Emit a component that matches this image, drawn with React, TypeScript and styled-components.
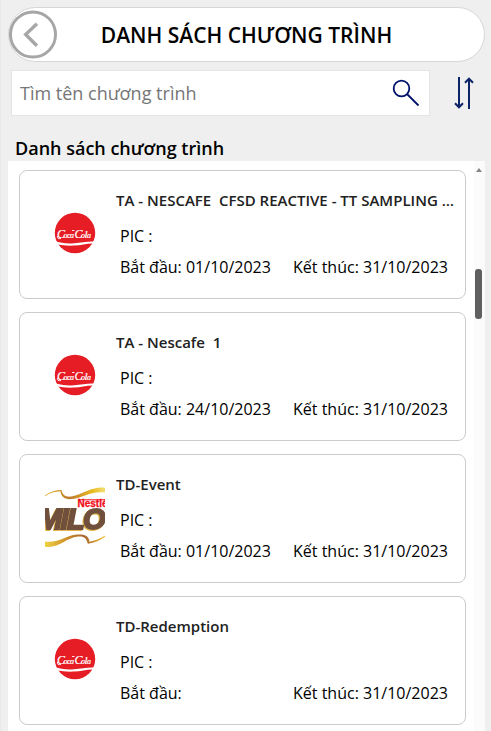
import React from 'react';
import styled, { createGlobalStyle } from 'styled-components';

const GlobalStyle = createGlobalStyle`
  * { box-sizing: border-box; }
  body {
    margin: 0;
    background: #efefef;
    color: #000;
    font-family: "Open Sans", "Noto Sans", sans-serif;
  }
  button { padding: 0; border: 0; background: none; cursor: pointer; }
`;

const Page = styled.div`
  display: flex;
  flex-direction: column;
  height: 100vh;
  overflow: hidden;
  padding: 7px 6px 0 7px;
  border-left: 1px solid #e8e8e8;
`;

const Header = styled.header`
  display: grid;
  grid-template-columns: 48px 1fr 48px;
  align-items: center;
  flex: none;
  height: 55px;
  border: 1px solid #d6d6d6;
  border-radius: 28px;
  background: #fff;
`;

const BackButton = styled.button`
  display: flex;
  align-items: center;
  justify-content: center;
  width: 48px;
  height: 49px;
`;

const Title = styled.h1`
  margin: 0;
  text-align: center;
  font-size: 21px;
  font-weight: 600;
  line-height: 28px;
  white-space: nowrap;
`;

const Tools = styled.div`
  display: flex;
  align-items: center;
  flex: none;
  margin: 8px 11px 0 3px;
  gap: 24px;
`;

const SearchBox = styled.form`
  display: flex;
  flex: 1;
  min-width: 0;
  height: 46px;
  padding: 0 9px 0 8px;
  border: 1px solid #e4e4e4;
  background: #fff;
`;

const SearchInput = styled.input`
  flex: 1;
  min-width: 0;
  padding: 0;
  border: 0;
  outline: 0;
  background: none;
  font: 400 18px/24px "Open Sans", "Noto Sans", sans-serif;
  &::placeholder { color: #767676; opacity: 1; }
`;

const IconButton = styled.button`
  display: flex;
  align-items: center;
  justify-content: center;
  flex: none;
  height: 44px;
`;

const Heading = styled.h2`
  flex: none;
  margin: 20px 0 0 7px;
  font-size: 18px;
  font-weight: 600;
  line-height: 25px;
`;

const ListPanel = styled.section`
  display: flex;
  flex: 1;
  min-height: 0;
  background: #fff;
`;

const List = styled.ul`
  display: flex;
  flex: 1;
  flex-direction: column;
  gap: 13px;
  min-width: 0;
  margin: 0;
  padding: 9px 8px 0 11px;
  overflow: hidden;
  list-style: none;
`;

const Card = styled.li`
  display: grid;
  grid-template-columns: 60px 1fr;
  align-items: start;
  flex: none;
  height: 129px;
  padding: 19px 6px 0 25px;
  column-gap: 11px;
  border: 1px solid #cbcbcb;
  border-radius: 8px;
`;

const LogoCell = styled.div`
  display: flex;
  align-items: center;
  justify-content: center;
  height: 86px;
`;

const Info = styled.div`
  min-width: 0;
`;

const ProgramName = styled.h3`
  margin: 0;
  overflow: hidden;
  color: #212121;
  font-size: 15px;
  font-weight: 600;
  line-height: 20px;
  text-overflow: ellipsis;
  white-space: pre;
`;

const Detail = styled.p`
  margin: 15px 0 0;
  padding-left: 4px;
  font-size: 16px;
  line-height: 22px;
`;

const Dates = styled.div`
  display: grid;
  grid-template-columns: 1fr 166px;
  margin-top: 9px;
  padding-left: 4px;
  font-size: 16px;
  line-height: 22px;
  white-space: nowrap;
`;

const ScrollTrack = styled.div`
  display: flex;
  flex-direction: column;
  align-items: center;
  flex: none;
  width: 11px;
  padding: 7px 2px 0 0;
  gap: 97px;
  background: #fbfbfb;
`;

const ScrollThumb = styled.div`
  width: 7px;
  height: 50px;
  border-radius: 3px;
  background: #606060;
`;

const BackIcon = () => (
  <svg width="49" height="49" viewBox="0 0 49 49" fill="none" stroke="#a6a6a6" strokeWidth="3" aria-hidden="true">
    <circle cx="24.5" cy="24.5" r="23" />
    <path d="M28.5 13.5 17 24.5l11.5 11.5" strokeWidth="3.4" />
  </svg>
);

const SearchIcon = () => (
  <svg width="28" height="28" viewBox="0 0 28 28" fill="none" stroke="#00126b" strokeWidth="1.8" aria-hidden="true">
    <circle cx="9.5" cy="9.5" r="7.8" />
    <path d="m15 15 11.5 11.5" />
  </svg>
);

const SortIcon = () => (
  <svg width="20" height="34" viewBox="0 0 20 34" fill="none" stroke="#0c2467" strokeWidth="2" aria-hidden="true">
    <path d="M5 1v30M1 27.3l4 4 4-4M15 33V3M11 6.7l4-4 4 4" />
  </svg>
);

const ColaLogo = () => (
  <svg width="42" height="42" viewBox="0 0 42 42" role="img" aria-label="Coca-Cola">
    <circle cx="21" cy="21" r="20.2" fill="#e61d25" />
    <text x="3 9.5 13 16 20.5 27 30.5 33" y="25.5" fill="#fff" stroke="#fff" strokeWidth=".2" fontFamily="Liberation Serif, serif" fontStyle="italic" fontSize="12">
      C<tspan fontSize="8">oca</tspan>C<tspan fontSize="8">o</tspan><tspan fontSize="11">l</tspan><tspan fontSize="8">a</tspan>
    </text>
    <path d="M3.5 24q-.8 3.500 3.500 2.500M18 18.500h2.500" fill="none" stroke="#fff" strokeWidth=".9" />
    <path d="M0 29c7 1.500 12 3 20 2.200 8-.7 14-2.200 22-1.600v2c-8-.9-14 1.500-22 2-8 .5-12-1-18-1.200z" fill="#fff" />
  </svg>
);

const MiloLogo = () => (
  <svg width="60" height="60" viewBox="0 0 60 60" role="img" aria-label="Nestlé Milo">
    <defs>
      <linearGradient id="goldTop">
        <stop offset="0" stopColor="#e5b51f" />
        <stop offset=".4" stopColor="#bd782b" />
        <stop offset=".8" stopColor="#e9bd24" />
        <stop offset="1" stopColor="#f5df73" />
      </linearGradient>
      <linearGradient id="goldBottom">
        <stop offset="0" stopColor="#efd242" />
        <stop offset=".35" stopColor="#cf912b" />
        <stop offset=".65" stopColor="#a8622d" />
        <stop offset="1" stopColor="#edc32c" />
      </linearGradient>
      <filter id="goldEdge" x="-10%" y="-20%" width="120%" height="140%">
        <feDropShadow dx="-1" dy="1" stdDeviation=".5" floodColor="#e3b448" />
      </filter>
    </defs>
    <path d="M0 8.200C6 4.500 11 3 16.500 3c1 5 4 7.200 10 6.500C38 7.500 46-.5 60 .7v4.800C46 3.500 39 10.500 27 12c-7 .8-11-2-11.500-7.700C10 4.500 5 6 0 9.200z" fill="url(#goldTop)" />
    <path d="M0 54.500c14 2 20-6 32-7 8-.6 12 1.500 12.500 7.300C50 53.500 55 52 60 48.500v1.300c-5 3.600-10 6-17.200 7-1-5.500-4-8-10-7.200C21 51 14 61.500 0 59.700z" fill="url(#goldBottom)" />
    <text x="32.5" y="20" fill="#f20c19" stroke="#f20c19" strokeWidth=".3" fontFamily="Liberation Sans, sans-serif" fontSize="10" fontWeight="700">Nestlé</text>
    <path d="M33 12.800h27" stroke="#f20c19" strokeWidth="1" />
    <text x="-7 15.5 22 38" y="42" fill="#70503d" stroke="#70503d" strokeWidth="2" filter="url(#goldEdge)" fontFamily="Liberation Sans, sans-serif" fontSize="29" fontStyle="italic" fontWeight="700">MILO</text>
  </svg>
);

interface Program {
  name: string;
  start: string;
  end: string;
  brand: 'cola' | 'milo';
}

const programs: Program[] = [
  { name: 'TA - NESCAFE  CFSD REACTIVE - TT SAMPLING 2023', start: '01/10/2023', end: '31/10/2023', brand: 'cola' },
  { name: 'TA - Nescafe  1', start: '24/10/2023', end: '31/10/2023', brand: 'cola' },
  { name: 'TD-Event', start: '01/10/2023', end: '31/10/2023', brand: 'milo' },
  { name: 'TD-Redemption', start: '', end: '31/10/2023', brand: 'cola' },
];

export default function App() {
  return (
    <>
      <GlobalStyle />
      <Page>
        <Header>
          <BackButton type="button" aria-label="Quay lại"><BackIcon /></BackButton>
          <Title>DANH SÁCH CHƯƠNG TRÌNH</Title>
        </Header>
        <Tools>
          <SearchBox role="search" onSubmit={(event) => event.preventDefault()}>
            <SearchInput type="text" aria-label="Tìm tên chương trình" placeholder="Tìm tên chương trình" />
            <IconButton type="submit" aria-label="Tìm kiếm"><SearchIcon /></IconButton>
          </SearchBox>
          <IconButton type="button" aria-label="Sắp xếp"><SortIcon /></IconButton>
        </Tools>
        <Heading>Danh sách chương trình</Heading>
        <ListPanel>
          <List>
            {programs.map((program) => (
              <Card key={program.name}>
                <LogoCell>{program.brand === 'cola' ? <ColaLogo /> : <MiloLogo />}</LogoCell>
                <Info>
                  <ProgramName>{program.name}</ProgramName>
                  <Detail>PIC :</Detail>
                  <Dates>
                    <span>Bắt đầu: {program.start}</span>
                    <span>Kết thúc: {program.end}</span>
                  </Dates>
                </Info>
              </Card>
            ))}
          </List>
          <ScrollTrack aria-hidden="true">
            <svg width="6" height="4" viewBox="0 0 6 4"><path d="M3 0 6 4H0z" fill="#858585" /></svg>
            <ScrollThumb />
          </ScrollTrack>
        </ListPanel>
      </Page>
    </>
  );
}
